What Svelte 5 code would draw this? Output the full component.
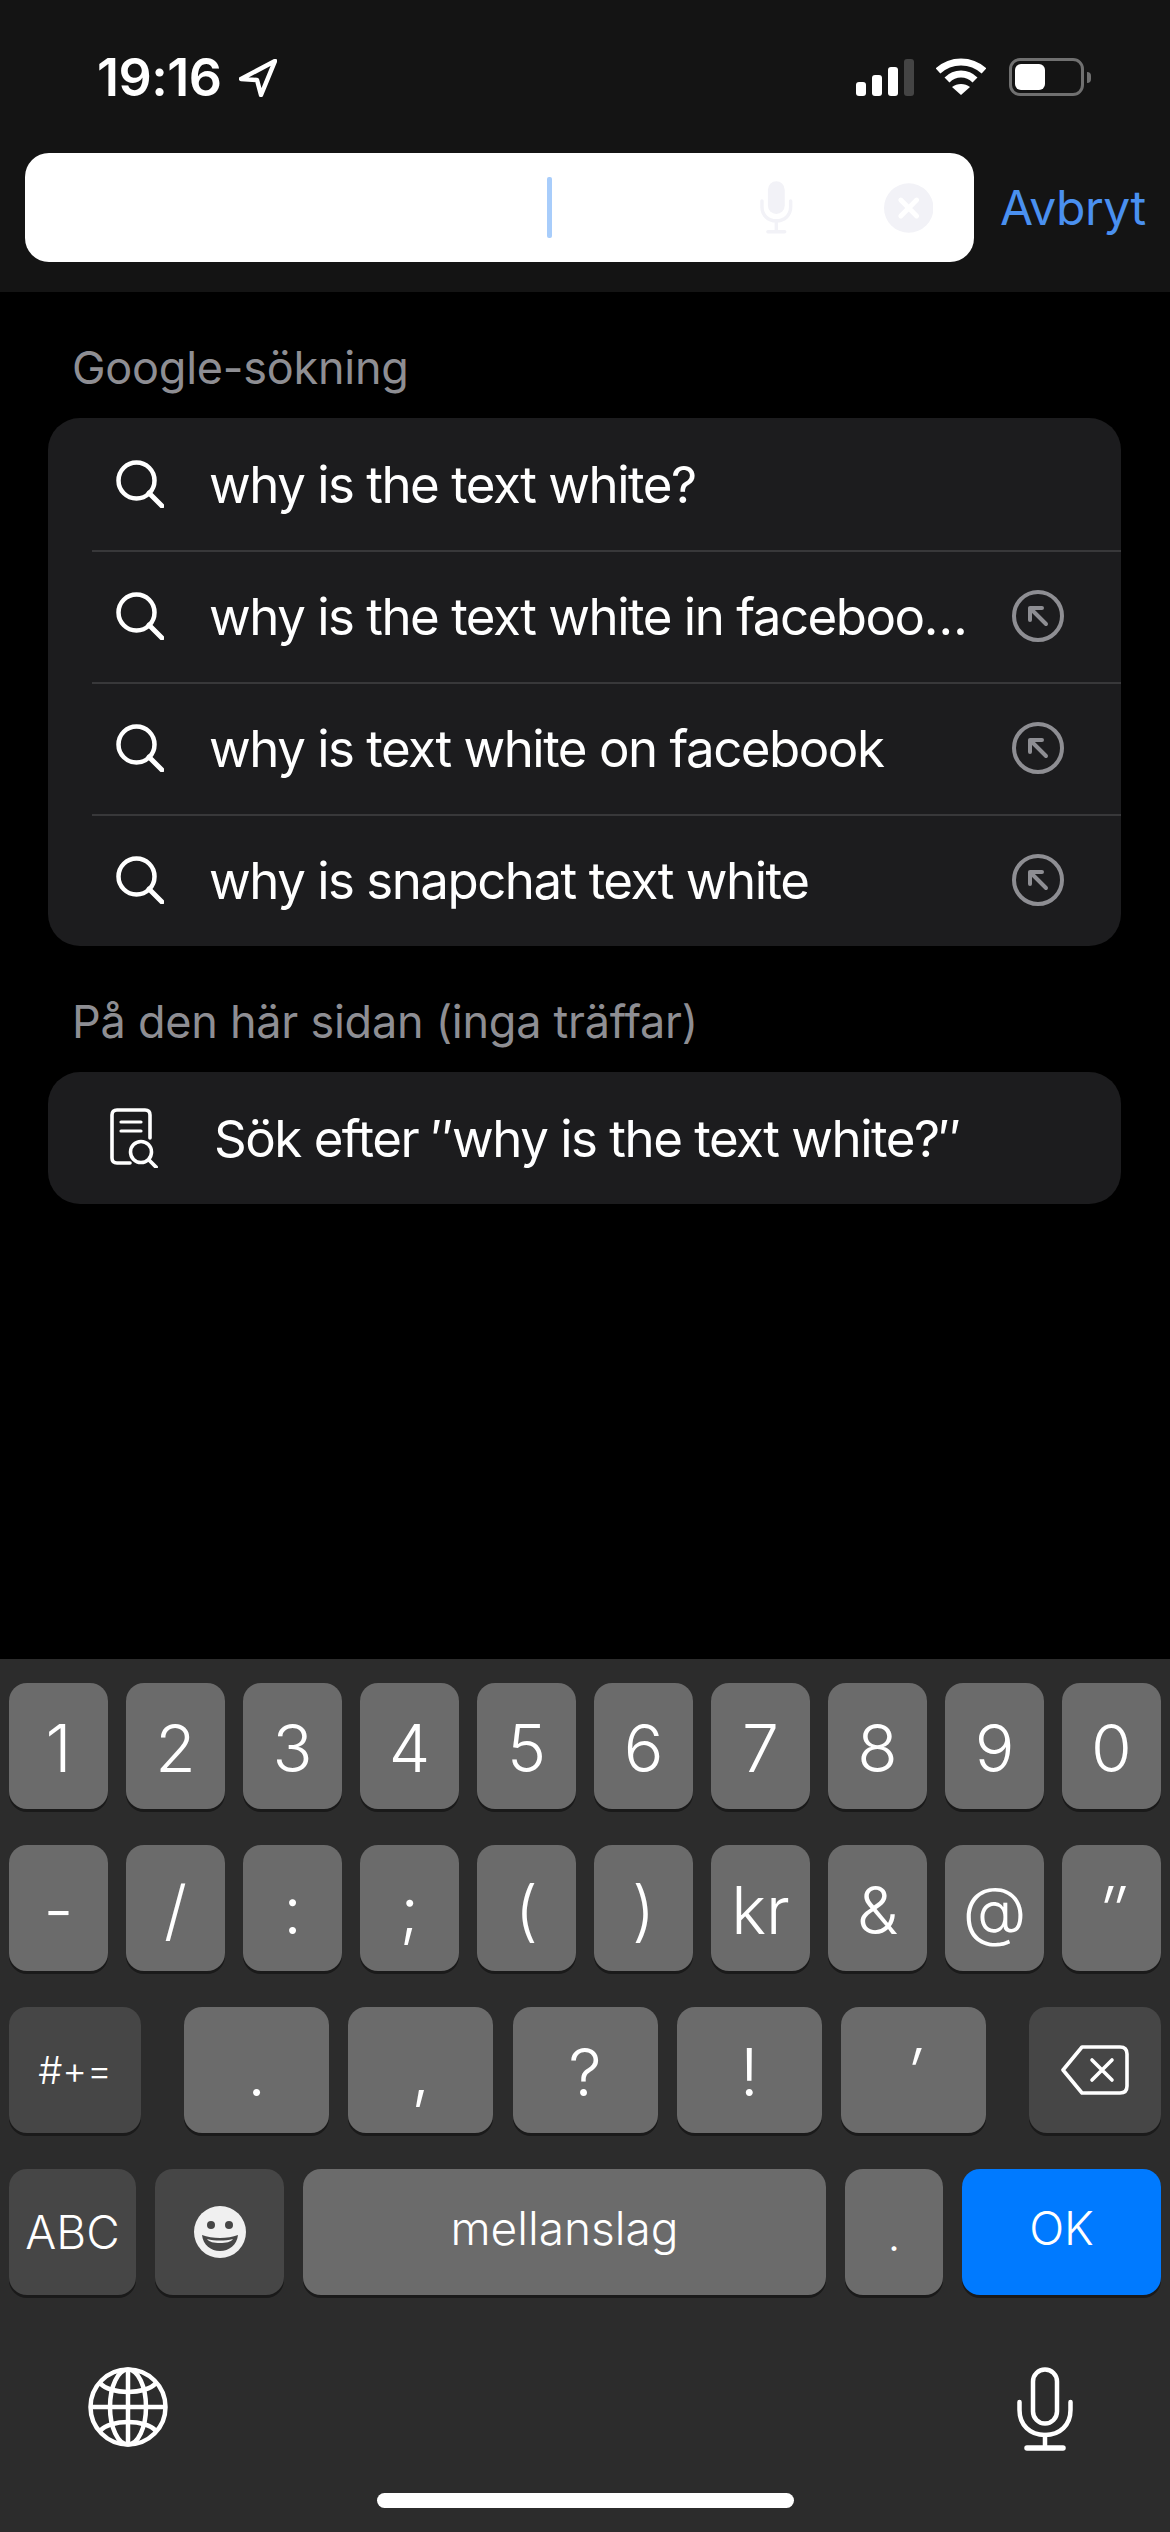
<script>
	const suggestions = [
		{ text: 'why is the text white?', fill: false },
		{ text: 'why is the text white in faceboo…', fill: true },
		{ text: 'why is text white on facebook', fill: true },
		{ text: 'why is snapchat text white', fill: true }
	];
	const digits = ['1', '2', '3', '4', '5', '6', '7', '8', '9', '0'];
	const symbols = ['-', '/', ':', ';', '(', ')', 'kr', '&', '@', '″'];
	const punctuation = ['.', ',', '?', '!', '′'];
	const slanted = ['″', '′'];
</script>

<div class="phone">
	<header class="top">
		<div class="status">
			<div class="clock">
				<span class="time">19:16</span>
				<svg class="loc" width="38" height="38" viewBox="0 0 38 38">
					<path d="M36 2 L2 20 L18 21 L22 36 Z" fill="none" stroke="#fff" stroke-width="4.5" stroke-linejoin="round" />
				</svg>
			</div>
			<div class="indicators">
				<div class="signal">
					<i style="height: 14px"></i>
					<i style="height: 21px"></i>
					<i style="height: 29px"></i>
					<i class="off" style="height: 37px"></i>
				</div>
				<svg class="wifi" width="50" height="38" viewBox="0 0 50 38">
					<path d="M2 13 C15 1 35 1 48 13" fill="none" stroke="#fff" stroke-width="7" />
					<path d="M11 22 C19 14 31 14 39 22" fill="none" stroke="#fff" stroke-width="7" />
					<path d="M25 37 L16 29 C21 25 29 25 34 29 Z" fill="#fff" />
				</svg>
				<div class="battery"><span class="level"></span></div>
				<span class="nub"></span>
			</div>
		</div>
		<div class="search-row">
			<div class="field">
				<span class="caret"></span>
				<svg class="field-mic" width="33" height="53" viewBox="0 0 33 53">
					<rect x="8" y="0" width="17" height="33" rx="8.5" fill="#f2f2f7" />
					<path d="M2 20 V26 C2 34 8 40 16.5 40 C25 40 31 34 31 26 V20 M16.5 40 V50 M8 51 H25" fill="none" stroke="#f2f2f7" stroke-width="3.5" stroke-linecap="round" />
				</svg>
				<svg class="clear" width="50" height="50" viewBox="0 0 50 50">
					<circle cx="25" cy="25" r="25" fill="#f2f2f7" />
					<path d="M17 17 L33 33 M33 17 L17 33" stroke="#fff" stroke-width="5" stroke-linecap="round" />
				</svg>
			</div>
			<span class="cancel">Avbryt</span>
		</div>
	</header>

	<main class="results">
		<h2>Google-sökning</h2>
		<ul class="card">
			{#each suggestions as item}
				<li class="row">
					<svg class="lens" width="48" height="48" viewBox="0 0 48 48">
						<circle cx="20.5" cy="20.5" r="18" fill="none" stroke="#fff" stroke-width="4.5" />
						<path d="M33 33 L46 46" stroke="#fff" stroke-width="5" stroke-linecap="round" />
					</svg>
					<span class="label">{item.text}</span>
					{#if item.fill}
						<svg class="fill" width="52" height="52" viewBox="0 0 52 52">
							<circle cx="26" cy="26" r="24" fill="none" stroke="#8e8e93" stroke-width="4" />
							<path d="M18 18 L34 34 M18 30 V18 H30" fill="none" stroke="#8e8e93" stroke-width="4" stroke-linecap="round" stroke-linejoin="round" />
						</svg>
					{/if}
				</li>
			{/each}
		</ul>

		<h2>På den här sidan (inga träffar)</h2>
		<ul class="card">
			<li class="row page-row">
				<svg class="doc" width="48" height="60" viewBox="0 0 48 60">
					<path d="M20 55 H7 Q2 55 2 50 V7 Q2 2 7 2 H35 Q40 2 40 7 V30" fill="none" stroke="#fff" stroke-width="3.6" stroke-linecap="round" />
					<path d="M11 14 H31 M11 23 H31" stroke="#fff" stroke-width="3.2" stroke-linecap="round" />
					<circle cx="31" cy="44" r="10.5" fill="none" stroke="#fff" stroke-width="3.6" />
					<path d="M39 52 L46 59" stroke="#fff" stroke-width="3.8" stroke-linecap="round" />
				</svg>
				<span class="label">Sök efter ″why is the text white?″</span>
			</li>
		</ul>
	</main>

	<section class="keyboard">
		<div class="keys">
			{#each digits as k}<span class="key big">{k}</span>{/each}
		</div>
		<div class="keys">
			{#each symbols as k}<span class="key big" class:slant={slanted.includes(k)}>{k}</span>{/each}
		</div>
		<div class="keys third">
			<span class="key dark shift">#+=</span>
			<div class="punct">
				{#each punctuation as k}<span class="key big" class:slant={slanted.includes(k)}>{k}</span>{/each}
			</div>
			<span class="key dark del">
				<svg width="68" height="50" viewBox="0 0 68 50">
					<path d="M21 2 H59 Q66 2 66 9 V41 Q66 48 59 48 H21 L2 25 Z" fill="none" stroke="#fff" stroke-width="3.6" stroke-linejoin="round" />
					<path d="M31 15 L51 35 M51 15 L31 35" stroke="#fff" stroke-width="3.6" stroke-linecap="round" />
				</svg>
			</span>
		</div>
		<div class="keys fourth">
			<span class="key dark abc">ABC</span>
			<span class="key dark emoji">
				<svg width="52" height="52" viewBox="0 0 52 52">
					<ellipse cx="26" cy="26" rx="26" ry="26" fill="#f0f0f0" />
					<circle cx="17" cy="19" r="4" fill="#464646" />
					<circle cx="35" cy="19" r="4" fill="#464646" />
					<path d="M8 29 C18 33 34 33 44 29 C43 39 35 45 26 45 C17 45 9 39 8 29 Z" fill="#464646" />
					<path d="M13 33 C21 35 31 35 39 33 C37 36 32 37 26 37 C20 37 15 36 13 33 Z" fill="#f0f0f0" />
				</svg>
			</span>
			<span class="key space">mellanslag</span>
			<span class="key dot big">.</span>
			<span class="key ok">OK</span>
		</div>
		<div class="kb-bottom">
			<svg width="80" height="80" viewBox="0 0 80 80">
				<g fill="none" stroke="#fff" stroke-width="4.5">
					<circle cx="40" cy="40" r="37.5" />
					<ellipse cx="40" cy="40" rx="18" ry="37.5" />
					<path d="M40 2.5 V77.5 M2.5 40 H77.5" />
					<path d="M12 16 C22 28 58 28 68 16 M12 64 C22 52 58 52 68 64" />
				</g>
			</svg>
			<svg width="56" height="84" viewBox="0 0 56 84">
				<g fill="none" stroke="#fff" stroke-width="4.5" stroke-linecap="round">
					<rect x="16" y="2.5" width="24" height="54" rx="12" />
					<path d="M2.5 35 V43 C2.5 58 13 68 28 68 C43 68 53.5 58 53.5 43 V35" />
					<path d="M28 68 V80" />
				</g>
				<path d="M10 81 H46" stroke="#fff" stroke-width="5.5" stroke-linecap="round" />
			</svg>
		</div>
		<div class="home"></div>
	</section>
</div>

<style>
	:global(body) {
		margin: 0;
		background: #000;
	}

	.phone {
		width: 1170px;
		height: 2532px;
		display: flex;
		flex-direction: column;
		background: #000;
		color: #fff;
		font-family: Inter, "Liberation Sans", sans-serif;
		overflow: hidden;
	}

	/* top bar */
	.top {
		height: 292px;
		background: #141414;
		flex-shrink: 0;
	}

	.status {
		height: 153px;
		box-sizing: border-box;
		padding: 58px 79px 0 97px;
		display: flex;
		justify-content: space-between;
		align-items: flex-start;
	}

	.clock {
		display: flex;
		align-items: center;
		gap: 17px;
		height: 40px;
	}

	.time {
		font-size: 52px;
		font-weight: 600;
		letter-spacing: -0.5px;
		line-height: 40px;
	}

	.indicators {
		display: flex;
		align-items: flex-end;
		height: 38px;
	}

	.signal {
		display: flex;
		align-items: flex-end;
		gap: 6px;
		margin-right: 22px;
	}

	.signal i {
		display: block;
		width: 10px;
		border-radius: 3px;
		background: #fff;
	}

	.signal i.off {
		background: #444;
	}

	.wifi {
		margin-right: 23px;
	}

	.battery {
		width: 75px;
		height: 38px;
		box-sizing: border-box;
		border: 3px solid #707070;
		border-radius: 11px;
		padding: 3px;
	}

	.level {
		display: block;
		width: 30px;
		height: 100%;
		background: #fff;
		border-radius: 6px;
	}

	.nub {
		width: 4px;
		height: 11px;
		margin: 0 0 13px 3px;
		background: #707070;
		border-radius: 0 4px 4px 0;
	}

	.search-row {
		display: flex;
		align-items: center;
		padding-left: 25px;
	}

	.field {
		width: 949px;
		height: 109px;
		background: #fff;
		border-radius: 24px;
		display: flex;
		align-items: center;
		box-sizing: border-box;
		padding: 0 41px 0 522px;
	}

	.caret {
		width: 5px;
		height: 61px;
		background: #a8cdfb;
		border-radius: 2px;
	}

	.field-mic {
		margin-left: 208px;
	}

	.clear {
		margin-left: 91px;
	}

	.cancel {
		margin-left: 26px;
		font-size: 48px;
		letter-spacing: -0.5px;
		color: #4a90f0;
		line-height: 109px;
	}

	/* search results */
	.results {
		flex: 1;
		padding: 0 49px 0 48px;
	}

	h2 {
		margin: 0;
		padding: 46px 0 20px 24px;
		font-size: 45px;
		font-weight: 400;
		line-height: 60px;
		color: #8e8e93;
		letter-spacing: -0.25px;
	}

	.card {
		list-style: none;
		margin: 0;
		padding: 0;
		background: #1c1c1e;
		border-radius: 32px;
		overflow: hidden;
	}

	.row {
		position: relative;
		height: 132px;
		display: flex;
		align-items: center;
		padding: 0 57px 0 68px;
		box-sizing: border-box;
	}

	.row + .row::before {
		content: "";
		position: absolute;
		top: 0;
		left: 44px;
		right: 0;
		height: 1.5px;
		background: #38383a;
	}

	.lens {
		flex-shrink: 0;
	}

	.label {
		flex: 1;
		margin-left: 45px;
		font-size: 51px;
		letter-spacing: -1.5px;
		white-space: nowrap;
	}

	.fill {
		flex-shrink: 0;
	}

	.page-row {
		padding-left: 62px;
	}

	.page-row .label {
		margin-left: 56px;
	}

	/* keyboard */
	.keyboard {
		height: 873px;
		flex-shrink: 0;
		box-sizing: border-box;
		background: #2c2c2c;
		padding: 24px 9px 0;
		display: flex;
		flex-direction: column;
		gap: 36px;
		position: relative;
	}

	.keys {
		display: flex;
		justify-content: space-between;
	}

	.key {
		width: 99px;
		height: 126px;
		display: flex;
		align-items: center;
		justify-content: center;
		background: #6b6b6b;
		border-radius: 18px;
		box-shadow: 0 3px 0 #1a1a1a;
		font-weight: 300;
		font-size: 46px;
		color: #fff;
	}

	.big {
		font-size: 66px;
		padding-top: 4px;
		box-sizing: border-box;
	}

	.slant {
		font-style: italic;
	}

	.dark {
		background: #464646;
	}

	.shift {
		width: 132px;
		font-size: 38px;
	}

	.del {
		width: 132px;
	}

	.punct {
		display: flex;
		justify-content: space-between;
		width: 802px;
	}

	.punct .key {
		width: 145px;
	}

	.abc {
		width: 127px;
	}

	.emoji {
		width: 129px;
	}

	.space {
		width: 523px;
		padding-bottom: 8px;
		box-sizing: border-box;
	}

	.dot {
		width: 98px;
		font-size: 46px;
	}

	.ok {
		width: 199px;
		background: #007aff;
		padding-bottom: 8px;
		box-sizing: border-box;
	}

	.kb-bottom {
		display: flex;
		justify-content: space-between;
		align-items: flex-start;
		padding: 36px 88px 0 79px;
	}

	.home {
		position: absolute;
		left: 377px;
		bottom: 24px;
		width: 417px;
		height: 15px;
		border-radius: 8px;
		background: #fff;
	}
</style>
